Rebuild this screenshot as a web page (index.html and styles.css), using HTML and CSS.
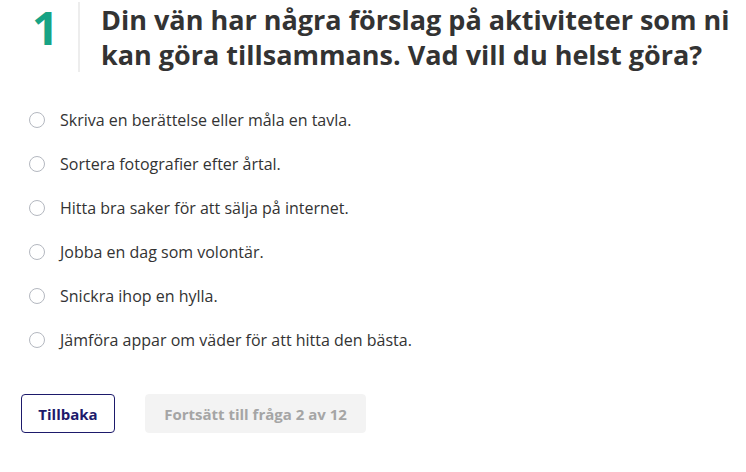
FILE: index.html
```html
<!DOCTYPE html>
<html lang="sv">
<head>
<meta charset="utf-8">
<title>Fråga 1</title>
<link rel="stylesheet" href="styles.css">
</head>
<body>
<main class="page">
  <header class="question">
    <div class="number">1</div>
    <h1 class="title">Din vän har några förslag på aktiviteter som ni kan göra tillsammans. Vad vill du helst göra?</h1>
  </header>
  <ul class="options">
    <li class="option"><span class="radio"></span><span>Skriva en berättelse eller måla en tavla.</span></li>
    <li class="option"><span class="radio"></span><span>Sortera fotografier efter årtal.</span></li>
    <li class="option"><span class="radio"></span><span>Hitta bra saker för att sälja på internet.</span></li>
    <li class="option"><span class="radio"></span><span>Jobba en dag som volontär.</span></li>
    <li class="option"><span class="radio"></span><span>Snickra ihop en hylla.</span></li>
    <li class="option"><span class="radio"></span><span>Jämföra appar om väder för att hitta den bästa.</span></li>
  </ul>
  <div class="actions">
    <button class="btn btn-back">Tillbaka</button>
    <button class="btn btn-next" disabled>Fortsätt till fråga 2 av 12</button>
  </div>
</main>
</body>
</html>
```
FILE: styles.css
```css
* { box-sizing: border-box; }
html, body { margin: 0; padding: 0; background: #fff; }
body {
  font-family: "Open Sans", "Noto Sans", sans-serif;
  color: #333;
  width: 746px;
  height: 472px;
  overflow: hidden;
}
.page {
  padding: 2px 0 0 21px;
}
.question {
  display: flex;
  align-items: flex-start;
}
.number {
  flex: none;
  width: 57px;
  padding-left: 11px;
  font-size: 47px;
  line-height: 50px;
  font-weight: 700;
  color: #17a385;
}
.title {
  margin: 0;
  min-height: 70px;
  border-left: 2px solid #ededed;
  padding: 0 16px 0 21px;
  font-size: 27px;
  line-height: 35px;
  font-weight: 700;
  color: #333;
}
.options {
  list-style: none;
  margin: 26px 0 0 0;
  padding: 0;
}
.option {
  display: flex;
  align-items: center;
  height: 44px;
  font-size: 16px;
  color: #333;
}
.radio {
  width: 16px;
  height: 16px;
  border: 1px solid #b4b8c0;
  border-radius: 50%;
  margin: 0 15px 0 8px;
  flex: none;
}
.actions {
  display: flex;
  gap: 30px;
  margin-top: 32px;
}
.btn {
  font-family: "Open Sans", "Noto Sans", sans-serif;
  font-size: 15px;
  font-weight: 700;
  height: 39px;
  border-radius: 4px;
  padding: 0 10px;
}
.btn-back {
  width: 94px;
  background: #fff;
  border: 1px solid #1d1a6b;
  color: #1d1a6b;
}
.btn-next {
  width: 221px;
  background: #f3f3f3;
  border: 1px solid #f3f3f3;
  color: #a5a5a5;
}
```
